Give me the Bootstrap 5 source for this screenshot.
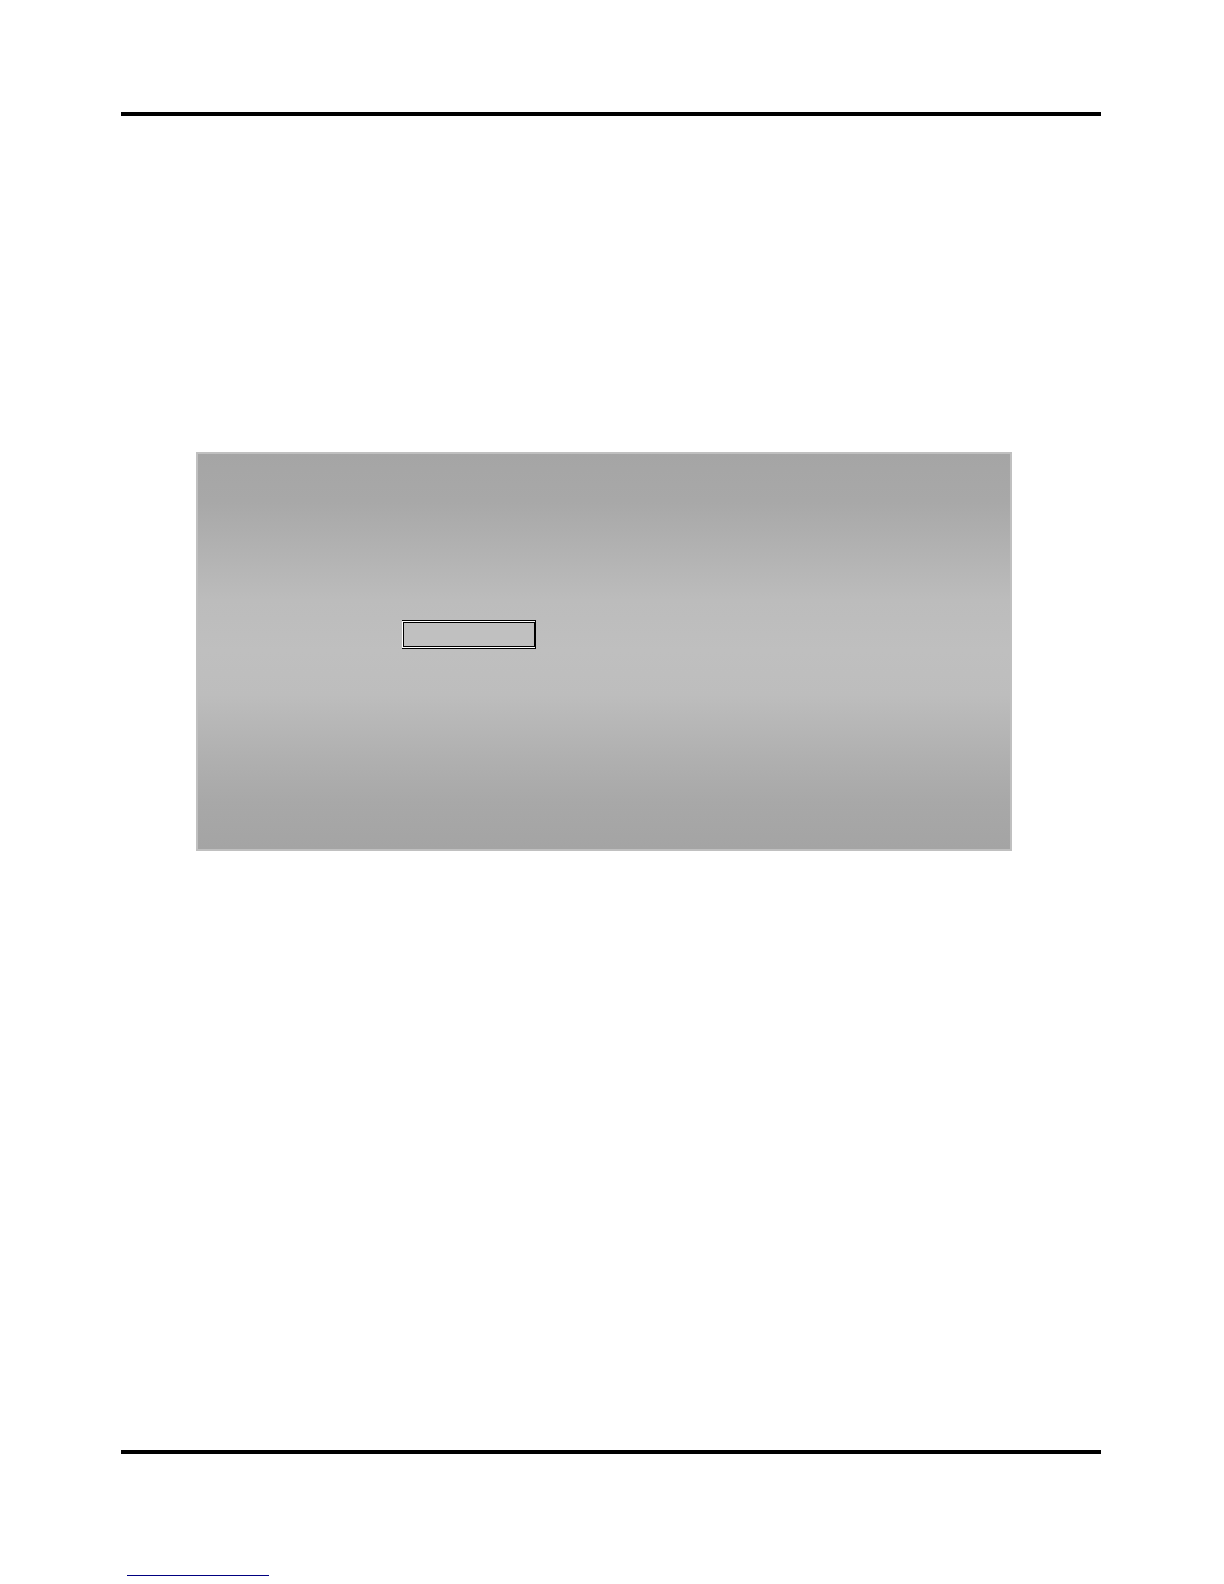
<!DOCTYPE html>
<html lang="en">
<head>
<meta charset="utf-8">
<meta name="viewport" content="width=device-width, initial-scale=1">
<title>Document page</title>
<link rel="stylesheet" href="https://cdn.jsdelivr.net/npm/bootstrap@5.3.0/dist/css/bootstrap.min.css">
<style>
  body { font-family: "Liberation Sans", Arial, sans-serif; }
  .sheet { min-height: 100vh; padding: 112px 123px 8px 121px; }
  .sheet-rule { height: 4px; background: #000; }
  .sheet-body { padding: 336px 89px 599px 75px; }
  .panel {
    min-height: 399px;
    padding: 166px 204px;
    border: 2px solid #c0c0c0;
    background: linear-gradient(#a5a5a5 0%, #a8a8a8 12%, #b0b0b0 22%, #bcbcbc 37%, #bfbfbf 50%, #bdbdbd 61%, #b7b7b7 68%, #afafaf 78%, #a8a8a8 88%, #a4a4a4 100%);
  }
  /* Double frame: black outer line, white gap, black inner line */
  .field-frame {
    width: 134px;
    height: 29px;
    padding: 1px 0 1px 1px;
    border: solid #000;
    border-width: 1px 1px 1px 0;
    background: #fff;
  }
  .field-input {
    border: 1px solid #000;
    background: #c0c0c0;
    font-size: 14px;
  }
  .sheet-footer { padding: 121px 0 0 6px; }
  .footer-link { width: 142px; border-bottom: 1px solid #000080; }
</style>
</head>
<body class="bg-white">
<div class="sheet d-flex flex-column">
  <header><hr class="sheet-rule m-0 border-0 opacity-100"></header>
  <main class="sheet-body">
    <section class="panel">
      <div class="field-frame d-flex">
        <input type="text" class="field-input w-100 h-100 px-2 py-0 rounded-0" aria-label="Field">
      </div>
    </section>
  </main>
  <footer>
    <hr class="sheet-rule m-0 border-0 opacity-100">
    <div class="sheet-footer"><a href="#" class="footer-link d-block" aria-label="Link"></a></div>
  </footer>
</div>
<script src="https://cdn.jsdelivr.net/npm/bootstrap@5.3.0/dist/js/bootstrap.bundle.min.js"></script>
</body>
</html>
